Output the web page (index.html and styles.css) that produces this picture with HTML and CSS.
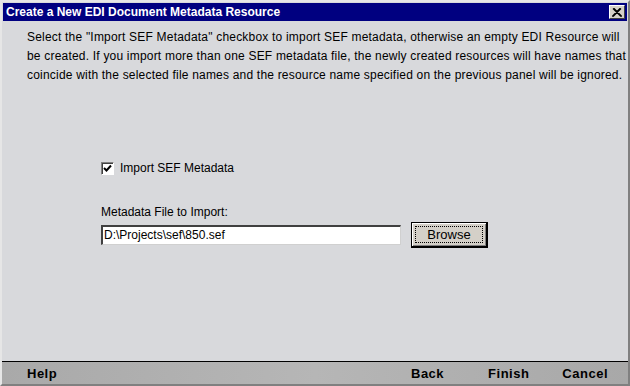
FILE: index.html
```html
<!DOCTYPE html>
<html>
<head>
<meta charset="utf-8">
<link rel="stylesheet" href="styles.css">
</head>
<body>
<div class="window">
  <div class="titlebar">
    <span class="title">Create a New EDI Document Metadata Resource</span>
    <span class="close"><svg width="10" height="9" viewBox="0 0 10 9"><path d="M1 0.5 L9 8.5 M9 0.5 L1 8.5 M2 0.5 L10 8.5 M8 0.5 L0 8.5" stroke="#000" stroke-width="1.2" fill="none"/></svg></span>
  </div>
  <div class="content">
    <p class="intro">Select the "Import SEF Metadata" checkbox to import SEF metadata, otherwise an empty EDI Resource will<br>be created. If you import more than one SEF metadata file, the newly created resources will have names that<br>coincide with the selected file names and the resource name specified on the previous panel will be ignored.</p>
    <div class="form">
      <label class="check-row">
        <span class="checkbox"><svg width="9" height="9" viewBox="0 0 9 9"><path d="M1 4 L3.5 6.5 L8 1.5" stroke="#000" stroke-width="2" fill="none"/></svg></span>
        <span>Import SEF Metadata</span>
      </label>
      <div class="field-label">Metadata File to Import:</div>
      <div class="file-row">
        <div class="input">D:\Projects\sef\850.sef</div>
        <div class="button"><span class="focus">Browse</span></div>
      </div>
    </div>
  </div>
  <div class="footer">
    <span class="fbtn help">Help</span>
    <span class="spacer"></span>
    <span class="fbtn back">Back</span>
    <span class="fbtn finish">Finish</span>
    <span class="fbtn cancel">Cancel</span>
  </div>
</div>
</body>
</html>
```

FILE: styles.css
```css
html, body {
  margin: 0;
  padding: 0;
  background: #d8d9dc;
}
.window {
  width: 630px;
  height: 386px;
  box-sizing: border-box;
  border-top: 2px solid #e6e6e6;
  border-left: 2px solid #e6e6e6;
  border-right: 2px solid #808080;
  border-bottom: 2px solid #808080;
  background: #d8d9dc;
  display: flex;
  flex-direction: column;
  font-family: "Liberation Sans", Arial, sans-serif;
  font-size: 12px;
  color: #000;
}
.titlebar {
  height: 18px;
  margin: 1px 1px 0 1px;
  background: #000080;
  display: flex;
  align-items: center;
  justify-content: space-between;
  padding: 0 2px 0 3px;
}
.title {
  color: #fff;
  font-weight: bold;
  font-size: 12px;
}
.close {
  width: 14px;
  height: 12px;
  background: #d4d0c8;
  border-top: 1px solid #fff;
  border-left: 1px solid #fff;
  border-right: 1px solid #404040;
  border-bottom: 1px solid #404040;
  display: flex;
  align-items: center;
  justify-content: center;
}
.content {
  flex: 1;
  padding: 7px 0 0 25px;
}
.intro {
  margin: 0;
  white-space: nowrap;
  letter-spacing: 0.2px;
  line-height: 19px;
}
.form {
  margin: 76px 0 0 74px;
}
.check-row {
  display: flex;
  align-items: center;
  gap: 6px;
}
.checkbox {
  width: 11px;
  height: 11px;
  background: #fff;
  border-top: 1px solid #808080;
  border-left: 1px solid #808080;
  border-right: 1px solid #fff;
  border-bottom: 1px solid #fff;
  box-shadow: inset 1px 1px 0 #404040;
  display: flex;
  align-items: center;
  justify-content: center;
}
.field-label {
  margin-top: 30px;
}
.file-row {
  display: flex;
  align-items: center;
  gap: 10px;
  margin-top: 3px;
}
.input {
  width: 296px;
  height: 17px;
  line-height: 17px;
  background: #fff;
  border-top: 2px solid #404040;
  border-left: 2px solid #404040;
  border-right: 1px solid #d0d0d0;
  border-bottom: 1px solid #d0d0d0;
  padding-left: 1px;
}
.button {
  box-sizing: border-box;
  width: 77px;
  height: 26px;
  background: #d4d0c8;
  border-top: 1px solid #000;
  border-left: 1px solid #000;
  border-right: 2px solid #000;
  border-bottom: 2px solid #000;
  box-shadow: inset 1px 1px 0 #fff, inset -1px -1px 0 #808080;
  padding: 3px;
  display: flex;
  font-size: 13px;
}
.focus {
  flex: 1;
  border: 1px dotted #000;
  display: flex;
  align-items: center;
  justify-content: center;
}
.footer {
  height: 22px;
  border-top: 1px solid #000;
  background: linear-gradient(90deg, #a9a9a9, #b6b6b6 50%, #a8a8a8);
  display: flex;
  align-items: center;
  font-weight: bold;
  font-size: 13px;
  letter-spacing: 0.5px;
  padding: 0 0 0 25px;
}
.spacer { flex: 1; }
.back { margin-right: 44px; }
.finish { margin-right: 33px; }
.cancel { margin-right: 20px; }
```
